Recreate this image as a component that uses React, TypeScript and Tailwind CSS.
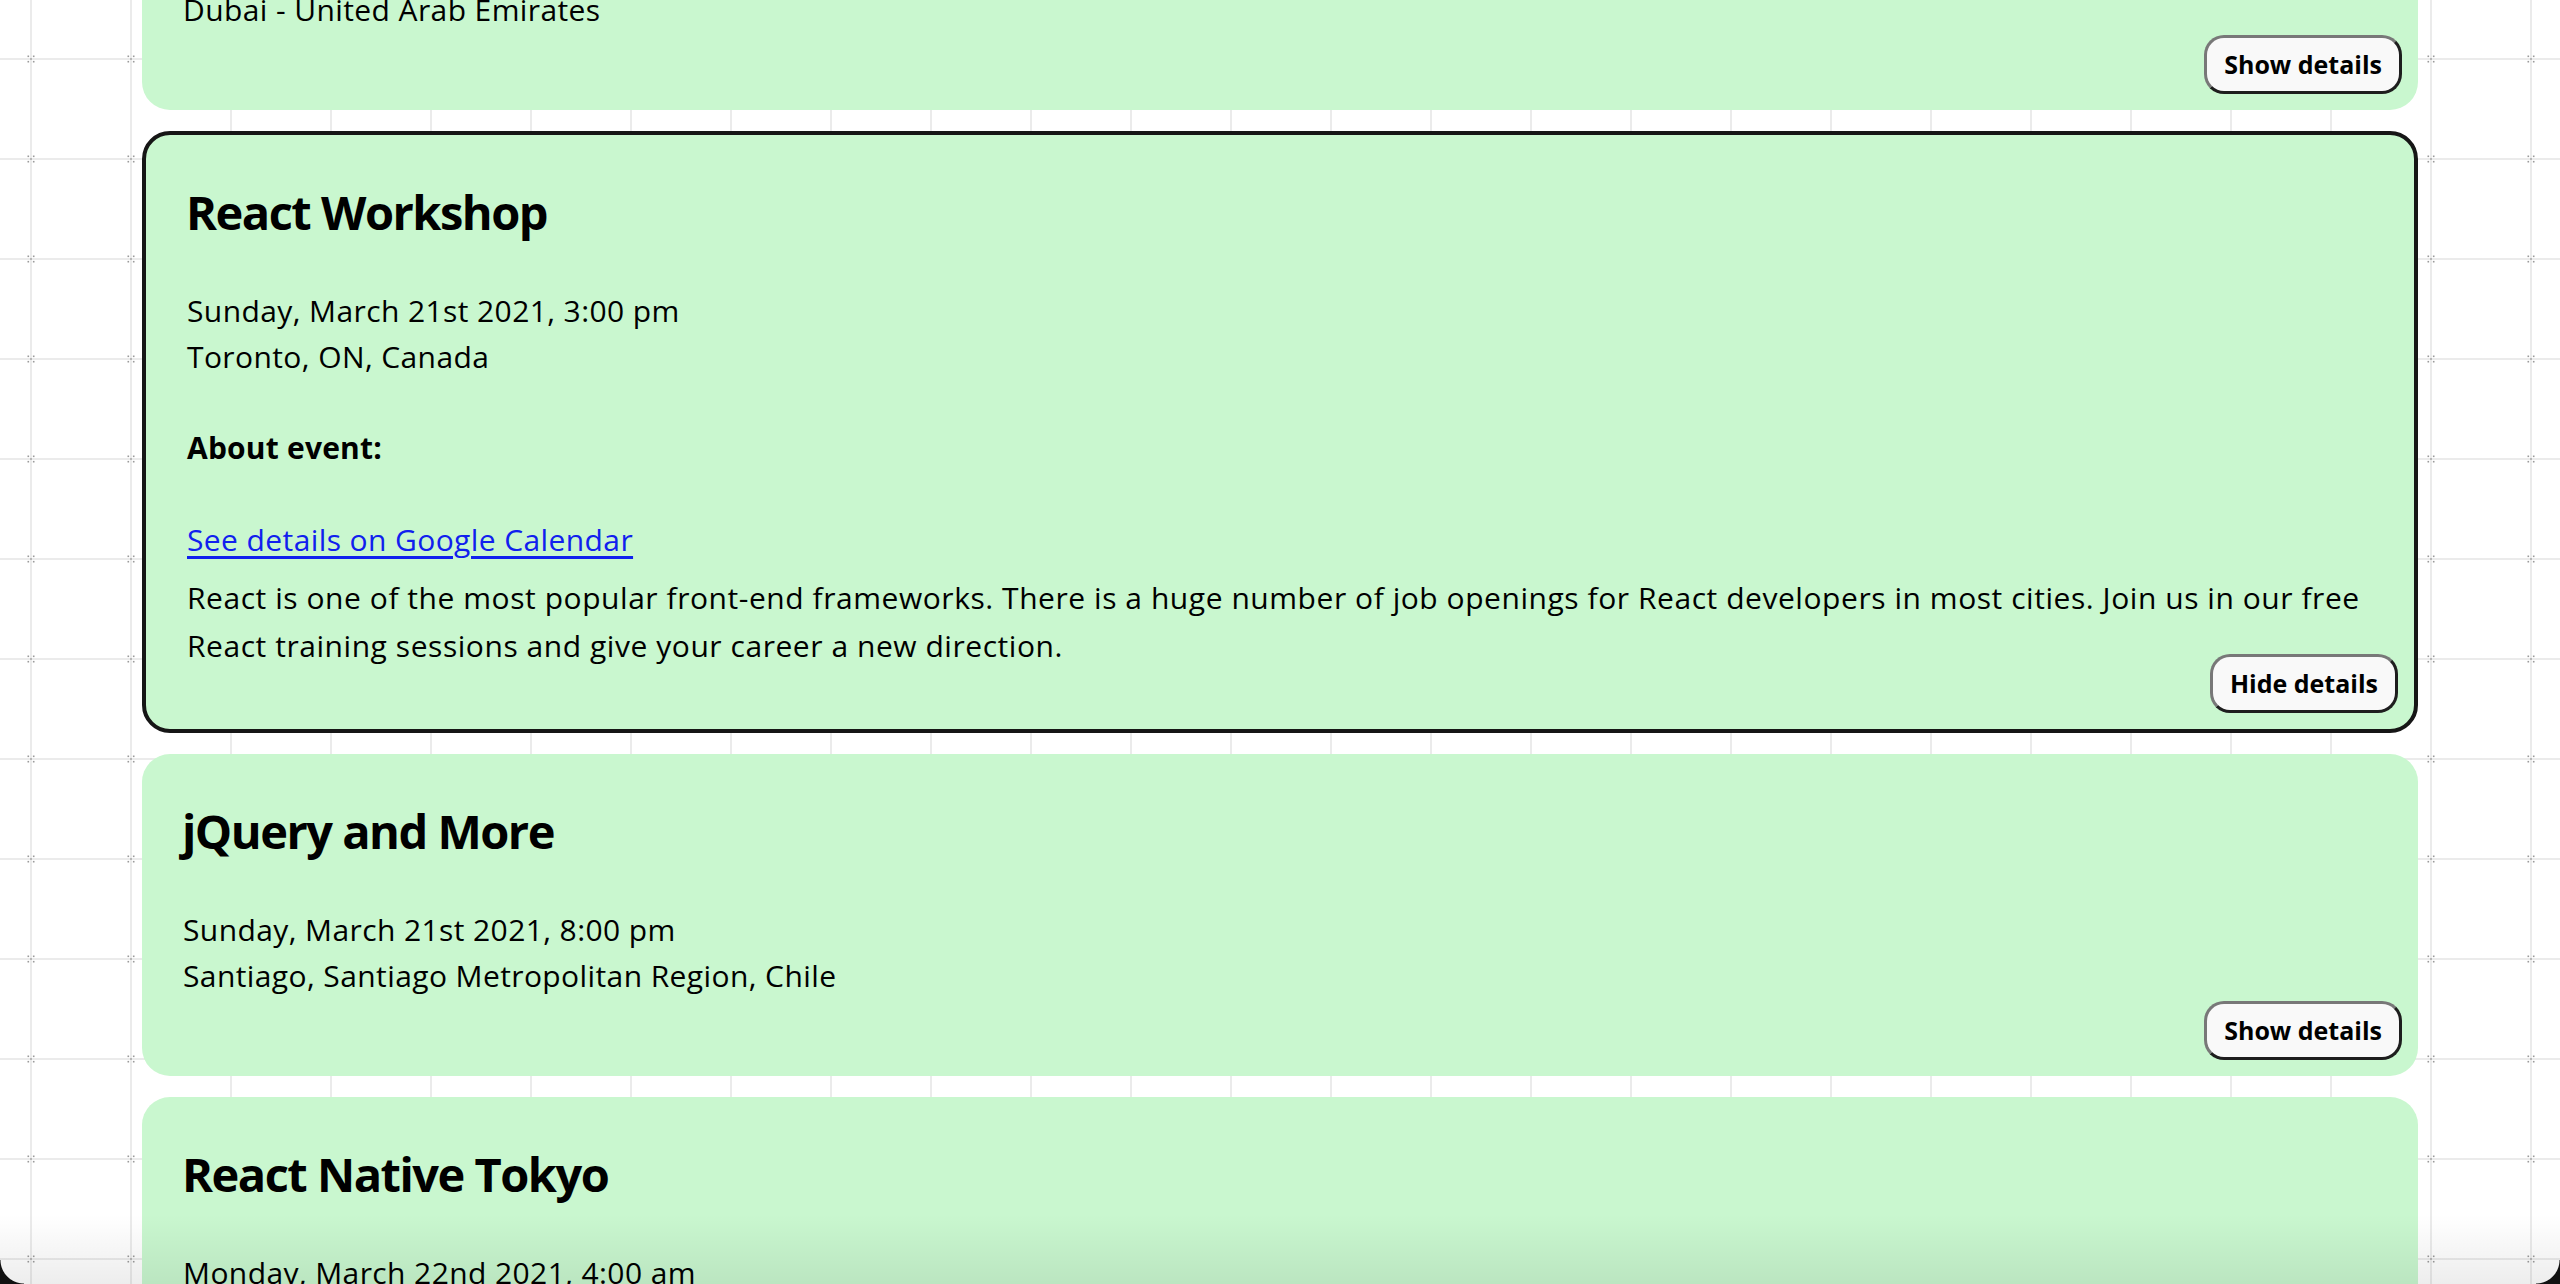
import { useState } from 'react';
import clsx from 'clsx';

type EventItem = {
  id: number;
  title: string;
  date: string;
  location: string;
  about?: string[];
};

const events: EventItem[] = [
  {
    id: 1,
    title: 'Flutter Festival Dubai',
    date: 'Saturday, March 20th 2021, 6:00 pm',
    location: 'Dubai - United Arab Emirates',
  },
  {
    id: 2,
    title: 'React Workshop',
    date: 'Sunday, March 21st 2021, 3:00 pm',
    location: 'Toronto, ON, Canada',
    about: [
      'React is one of the most popular front-end frameworks. There is a huge number of job openings for React developers in most cities. Join us in our free',
      'React training sessions and give your career a new direction.',
    ],
  },
  {
    id: 3,
    title: 'jQuery and More',
    date: 'Sunday, March 21st 2021, 8:00 pm',
    location: 'Santiago, Santiago Metropolitan Region, Chile',
  },
  {
    id: 4,
    title: 'React Native Tokyo',
    date: 'Monday, March 22nd 2021, 4:00 am',
    location: 'Tokyo, Japan',
  },
];

function GridBackground() {
  return (
    <svg className="absolute inset-0 h-full w-full" aria-hidden>
      <defs>
        <pattern id="grid" x="-19" y="9" width="100" height="100" patternUnits="userSpaceOnUse">
          <rect x="49" y="0" width="2" height="100" fill="#ebebeb" />
          <rect x="0" y="49" width="100" height="2" fill="#ebebeb" />
          <g fill="#9a9a9a">
            <rect x="46.5" y="46.5" width="1.6" height="1.6" />
            <rect x="51.9" y="46.5" width="1.6" height="1.6" />
            <rect x="46.5" y="51.9" width="1.6" height="1.6" />
            <rect x="51.9" y="51.9" width="1.6" height="1.6" />
            <rect x="49.2" y="49.2" width="1.6" height="1.6" />
          </g>
        </pattern>
      </defs>
      <rect width="100%" height="100%" fill="url(#grid)" />
    </svg>
  );
}

function EventCard({ ev, open, onToggle }: { ev: EventItem; open: boolean; onToggle: () => void }) {
  return (
    <div
      className={clsx(
        'relative rounded-[28px] bg-[#c9f7cf] px-[42px] pt-[49px] text-black',
        open ? 'border-4 border-[#161616] pb-[59px]' : 'pb-[77px]'
      )}
    >
      <h2 className="-ml-[2px] text-[47px] font-bold leading-[56px] tracking-[-1.5px]">{ev.title}</h2>
      <p className="mt-[48px] -ml-[1px] text-[30px] leading-[46px] tracking-[0.4px]">
        {ev.date}
        <br />
        {ev.location}
      </p>
      {open && ev.about && (
        <>
          <p className="mt-[45px] -ml-[1px] text-[30px] font-bold leading-[46px] tracking-[0.2px]">About event:</p>
          <a
            href="#"
            className="mt-[46px] -ml-[1px] block w-fit text-[30px] leading-[46px] tracking-[0.4px] text-[#1020ee] underline underline-offset-[5px]"
          >
            See details on Google Calendar
          </a>
          <p className="mt-[11px] -ml-[1px] whitespace-nowrap text-[30px] leading-[48px] tracking-[0.55px]">
            {ev.about[0]}
            <br />
            {ev.about[1]}
          </p>
        </>
      )}
      <button
        onClick={onToggle}
        className="absolute right-4 bottom-4 flex h-[59px] items-center rounded-[20px] border-[3px] border-t-[#787878] border-l-[#787878] border-r-[#1e1e1e] border-b-[#1e1e1e] bg-[#f9f9f9] px-[17px] text-[25px] font-bold leading-none text-black"
      >
        {open ? 'Hide details' : 'Show details'}
      </button>
    </div>
  );
}

export default function App() {
  const [openId, setOpenId] = useState<number | null>(2);

  return (
    <div className="relative h-[1284px] w-full overflow-hidden bg-white font-['Open_Sans',sans-serif]">
      <GridBackground />

      <div className="relative mx-auto -mt-[212px] flex w-[2276px] flex-col gap-[21px]">
        {events.map((ev) => (
          <EventCard
            key={ev.id}
            ev={ev}
            open={openId === ev.id}
            onToggle={() => setOpenId(openId === ev.id ? null : ev.id)}
          />
        ))}
      </div>

      <div className="pointer-events-none absolute inset-x-0 bottom-0 h-[70px] bg-linear-to-b from-transparent to-[rgba(0,0,0,0.07)]" />
      <div className="pointer-events-none absolute bottom-0 left-0 size-[24px] bg-[radial-gradient(circle_at_100%_0%,transparent_23px,#111_24px)]" />
      <div className="pointer-events-none absolute right-0 bottom-0 size-[24px] bg-[radial-gradient(circle_at_0%_0%,transparent_23px,#111_24px)]" />
    </div>
  );
}
